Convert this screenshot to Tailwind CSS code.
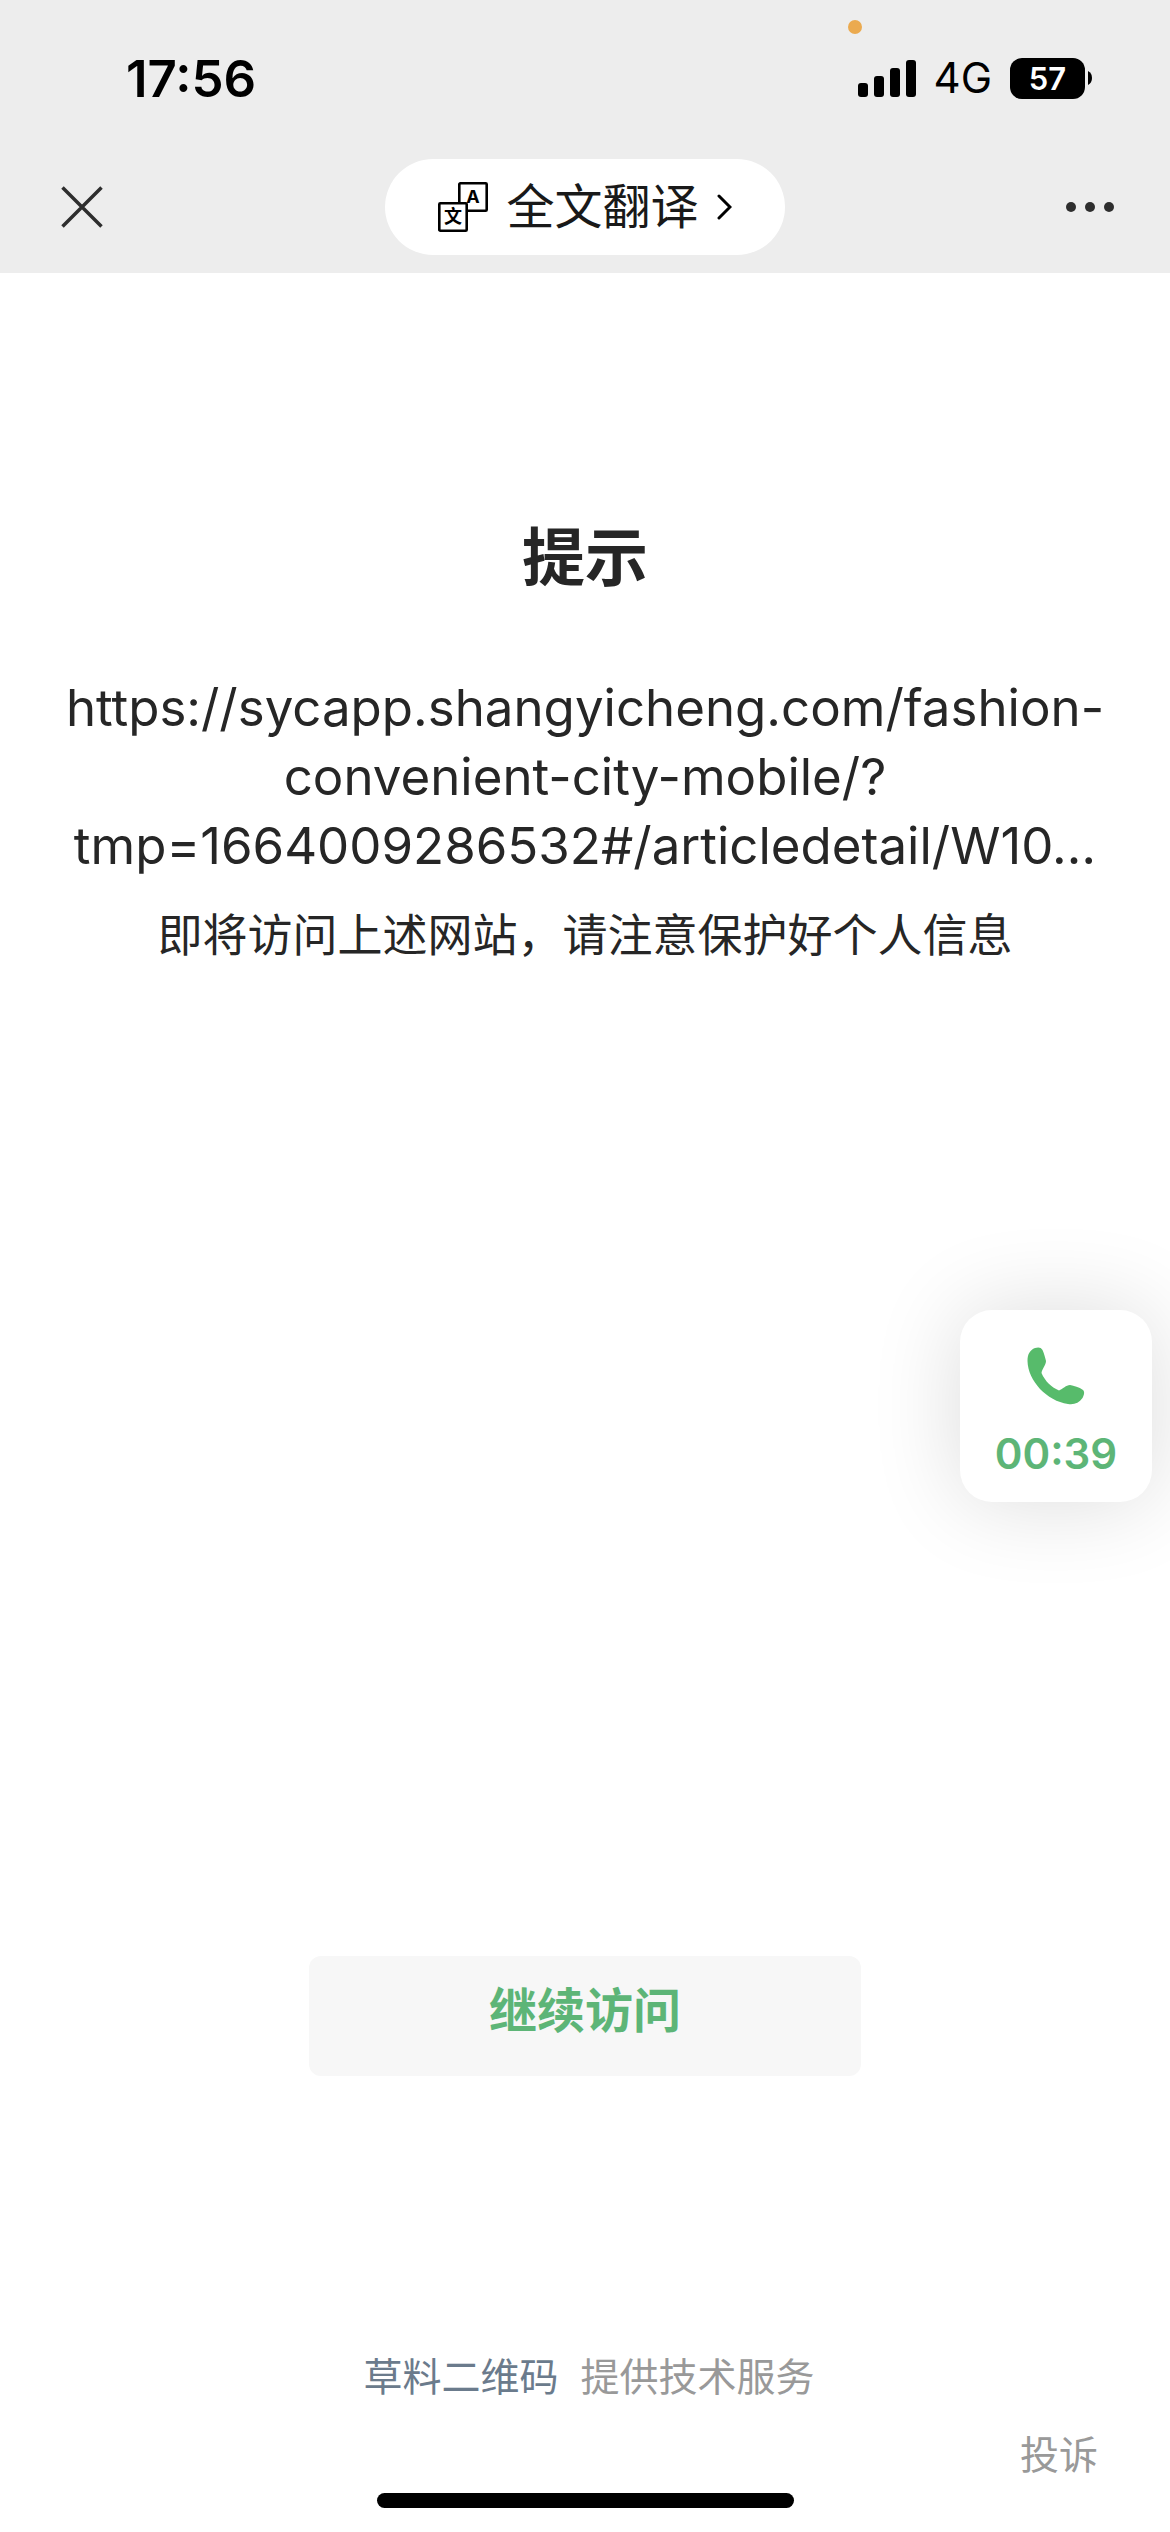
<!DOCTYPE html>
<html lang="zh-CN">
<head>
<meta charset="utf-8">
<meta name="viewport" content="width=device-width, initial-scale=1">
<title>提示</title>
<script src="https://cdn.jsdelivr.net/npm/@tailwindcss/browser@4"></script>
</head>
<body class="relative flex min-h-screen flex-col bg-white font-['Inter','Noto_Sans_CJK_SC',sans-serif] text-[#262626]">
  <header class="bg-[#ededed] pb-[15px]">
    <!-- Status bar -->
    <div class="relative flex h-[156px] items-center justify-between pr-[78px] pl-[126px] text-black">
      <span class="text-[51px] leading-none font-semibold">17:56</span>
      <span class="absolute top-5 right-[308px] size-3.5 rounded-full bg-[#ebaa4f]"></span>
      <div class="flex items-center">
        <svg class="h-[37px] w-[58px]" viewBox="0 0 58 37" aria-hidden="true">
          <rect x="0" y="23" width="10" height="14" rx="3"/>
          <rect x="16" y="16" width="10" height="21" rx="3"/>
          <rect x="32" y="8" width="10" height="29" rx="3"/>
          <rect x="48" y="0" width="10" height="37" rx="3"/>
        </svg>
        <span class="ml-[18px] text-[42px] leading-none">4G</span>
        <div class="ml-[18px] flex h-[41px] w-[75px] items-center justify-center rounded-xl bg-black text-[31px] leading-none font-semibold text-white">57</div>
        <svg class="ml-[3px] h-3.5 w-1" viewBox="0 0 4 14" aria-hidden="true"><path d="M0 0Q4 2 4 7T0 14Z"/></svg>
      </div>
    </div>
    <!-- Navigation bar -->
    <nav class="grid h-[102px] grid-cols-[1fr_auto_1fr] items-center">
      <button type="button" aria-label="关闭" class="ml-[61px] justify-self-start">
        <svg class="size-[42px]" viewBox="0 0 42 42" fill="none" stroke="#2e2e2e" stroke-width="3.5" aria-hidden="true"><path d="M1.500 1.500 40.500 40.500M40.500 1.500 1.500 40.500"/></svg>
      </button>
      <button type="button" class="flex h-24 w-[400px] items-center justify-center rounded-full bg-white text-[48px] leading-none text-[#191919]">
        <svg class="size-[50px]" viewBox="0 0 50 50" aria-hidden="true">
          <rect x="21.300" y="1.300" width="27.400" height="27.400" rx="1" fill="none" stroke="#000" stroke-width="2.600"/>
          <text x="35" y="21" text-anchor="middle" font-size="18" font-weight="700" font-family="Inter">A</text>
          <rect x="1.300" y="21.300" width="27.400" height="27.400" rx="1" fill="#fff" stroke="#000" stroke-width="2.600"/>
          <text x="15" y="41" text-anchor="middle" font-size="18" font-weight="700" font-family="Noto Sans CJK SC">文</text>
        </svg>
        <span class="ml-[18px]">全文翻译</span>
        <svg class="ml-[18px] h-[26px] w-[15px]" viewBox="0 0 15 26" fill="none" stroke="#000" stroke-width="3" stroke-linecap="round" aria-hidden="true"><path d="M2 2 13 13 2 24"/></svg>
      </button>
      <button type="button" aria-label="更多" class="mr-14 justify-self-end">
        <svg class="h-2.5 w-12" viewBox="0 0 48 10" fill="#2e2e2e" aria-hidden="true"><circle cx="5" cy="5" r="5"/><circle cx="24" cy="5" r="5"/><circle cx="43" cy="5" r="5"/></svg>
      </button>
    </nav>
  </header>

  <main class="flex flex-1 flex-col items-center pt-[240px] text-center">
    <h1 class="text-[63px] leading-[88px] font-bold">提示</h1>
    <p class="mt-[72px] text-[51px] leading-[69px]">https://sycapp.shangyicheng.com/fashion-<br>convenient-city-mobile/?<br>tmp=1664009286532#/articledetail/W10…</p>
    <p class="mt-6 text-[45px] leading-[64px]">即将访问上述网站，请注意保护好个人信息</p>
    <button type="button" class="mt-[988px] h-[120px] w-[552px] rounded-xl bg-[#f7f7f7] pb-2.5 text-[48px] leading-none font-bold text-[#5db577]">继续访问</button>
  </main>

  <footer class="flex flex-col pb-6 text-[39px] leading-[60px] text-[#999]">
    <p class="flex justify-center gap-[22px] pl-2"><a href="#" class="text-[#6b7b8c]">草料二维码</a><span>提供技术服务</span></p>
    <a href="#" class="mt-[18px] mr-[72px] self-end">投诉</a>
    <div class="mt-2 h-[15px] w-[417px] self-center rounded-full bg-black"></div>
  </footer>

  <!-- Floating call window -->
  <button type="button" aria-label="通话中 00:39" class="absolute top-[1310px] right-[18px] flex size-48 flex-col items-center rounded-[32px] bg-white pt-[37px] text-[#5db577] shadow-[0_0_90px_rgba(0,0,0,0.14)]">
    <svg class="size-[58px]" viewBox="0 0 58 58" fill="#57bb6b" aria-hidden="true"><path d="M8 1C11 0 14 0 15.500 3C17 6 18 10 19 14C19 18 15 22 14.500 26C18 34 24 40 32 43.500C36 42 39 38 43 38C47 39 52 40 56 43C58 45 57 48 55.500 51C52 56 47 58 41 57C20 54 1 34 .5 14C.5 7 3 3 8 1Z"/></svg>
    <span class="mt-[22px] text-[42px] leading-[54px] font-semibold">00:39</span>
  </button>
</body>
</html>
